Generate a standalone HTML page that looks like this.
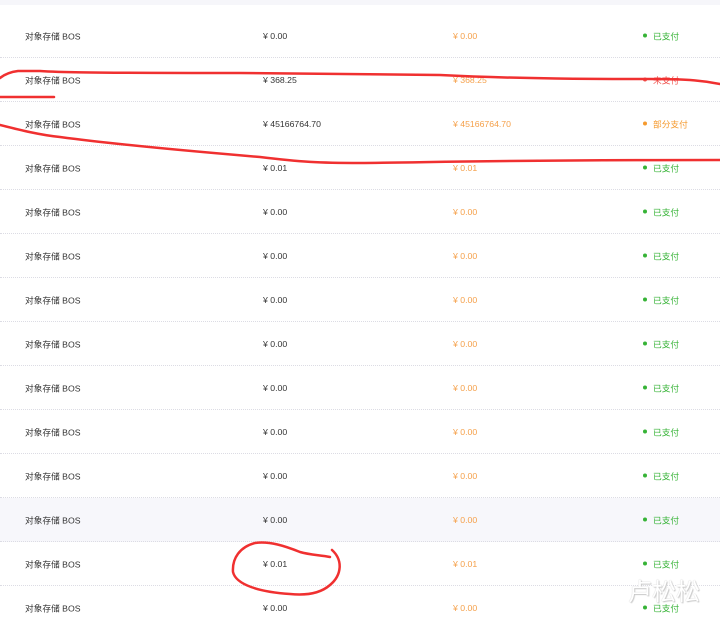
<!DOCTYPE html>
<html><head><meta charset="utf-8"><style>
body{margin:0;width:720px;height:617px;overflow:hidden;background:#fff;font-family:"Liberation Sans","Noto Sans CJK SC",sans-serif;font-size:8.7px;position:relative}
.r{position:absolute;left:0;width:720px;height:44px;border-bottom:1px dotted #dcdce4;box-sizing:border-box}
.r span{position:absolute;top:50%;transform:translateY(-50%);white-space:nowrap}
.a{left:25px;color:#333}.b{left:263px;color:#333}.c{left:453px;color:#f5a04a}
.d{left:653px;color:#36b336}
.d::before{content:"";position:absolute;left:-10px;top:4px;width:4px;height:4px;border-radius:50%;background:currentColor}
.o{color:#f59a2e}.rd{color:#f0504a}
.g{background:#f7f7fb}
</style></head><body>
<div style="position:absolute;top:0;left:0;width:720px;height:5px;background:#f6f6fa"></div>
<div class="r" style="top:14px"><span class="a">对象存储 BOS</span><span class="b">¥ 0.00</span><span class="c">¥ 0.00</span><span class="d">已支付</span></div>
<div class="r" style="top:58px"><span class="a">对象存储 BOS</span><span class="b">¥ 368.25</span><span class="c">¥ 368.25</span><span class="d rd">未支付</span></div>
<div class="r" style="top:102px"><span class="a">对象存储 BOS</span><span class="b">¥ 45166764.70</span><span class="c">¥ 45166764.70</span><span class="d o">部分支付</span></div>
<div class="r" style="top:146px"><span class="a">对象存储 BOS</span><span class="b">¥ 0.01</span><span class="c">¥ 0.01</span><span class="d">已支付</span></div>
<div class="r" style="top:190px"><span class="a">对象存储 BOS</span><span class="b">¥ 0.00</span><span class="c">¥ 0.00</span><span class="d">已支付</span></div>
<div class="r" style="top:234px"><span class="a">对象存储 BOS</span><span class="b">¥ 0.00</span><span class="c">¥ 0.00</span><span class="d">已支付</span></div>
<div class="r" style="top:278px"><span class="a">对象存储 BOS</span><span class="b">¥ 0.00</span><span class="c">¥ 0.00</span><span class="d">已支付</span></div>
<div class="r" style="top:322px"><span class="a">对象存储 BOS</span><span class="b">¥ 0.00</span><span class="c">¥ 0.00</span><span class="d">已支付</span></div>
<div class="r" style="top:366px"><span class="a">对象存储 BOS</span><span class="b">¥ 0.00</span><span class="c">¥ 0.00</span><span class="d">已支付</span></div>
<div class="r" style="top:410px"><span class="a">对象存储 BOS</span><span class="b">¥ 0.00</span><span class="c">¥ 0.00</span><span class="d">已支付</span></div>
<div class="r" style="top:454px"><span class="a">对象存储 BOS</span><span class="b">¥ 0.00</span><span class="c">¥ 0.00</span><span class="d">已支付</span></div>
<div class="r g" style="top:498px"><span class="a">对象存储 BOS</span><span class="b">¥ 0.00</span><span class="c">¥ 0.00</span><span class="d">已支付</span></div>
<div class="r" style="top:542px"><span class="a">对象存储 BOS</span><span class="b">¥ 0.01</span><span class="c">¥ 0.01</span><span class="d">已支付</span></div>
<div class="r" style="top:586px;border:none"><span class="a">对象存储 BOS</span><span class="b">¥ 0.00</span><span class="c">¥ 0.00</span><span class="d">已支付</span></div>
<div style="position:absolute;left:628px;top:572px;font-size:24px;color:#fff;text-shadow:0 0 1px #bbb,1px 1px 1px #ccc;font-family:'Noto Sans CJK SC',sans-serif">卢松松</div>
<svg width="720" height="617" style="position:absolute;left:0;top:0" fill="none" stroke="#f03030" stroke-width="2.5" stroke-linecap="round">
<path d="M0 78 C5 74 10 72 18 71 L40 71 C55 72 70 73 240 73 C300 73 360 74 440 75 C520 79 600 79 650 79 C690 79 705 81 720 84"/>
<path d="M0 97 L54 97"/>
<path d="M0 125 C20 130 40 135 60 137 C120 145 200 152 260 157 C300 162 320 163 360 163 C450 162 500 160 720 160"/>
<path d="M330 557 C320 555 310 555 300 552 C285 546 270 541 255 543 C240 547 232 558 233 572 C236 585 260 592 290 594 C310 596 322 592 330 585 C342 575 343 560 332 550"/>
</svg>
</body></html>
